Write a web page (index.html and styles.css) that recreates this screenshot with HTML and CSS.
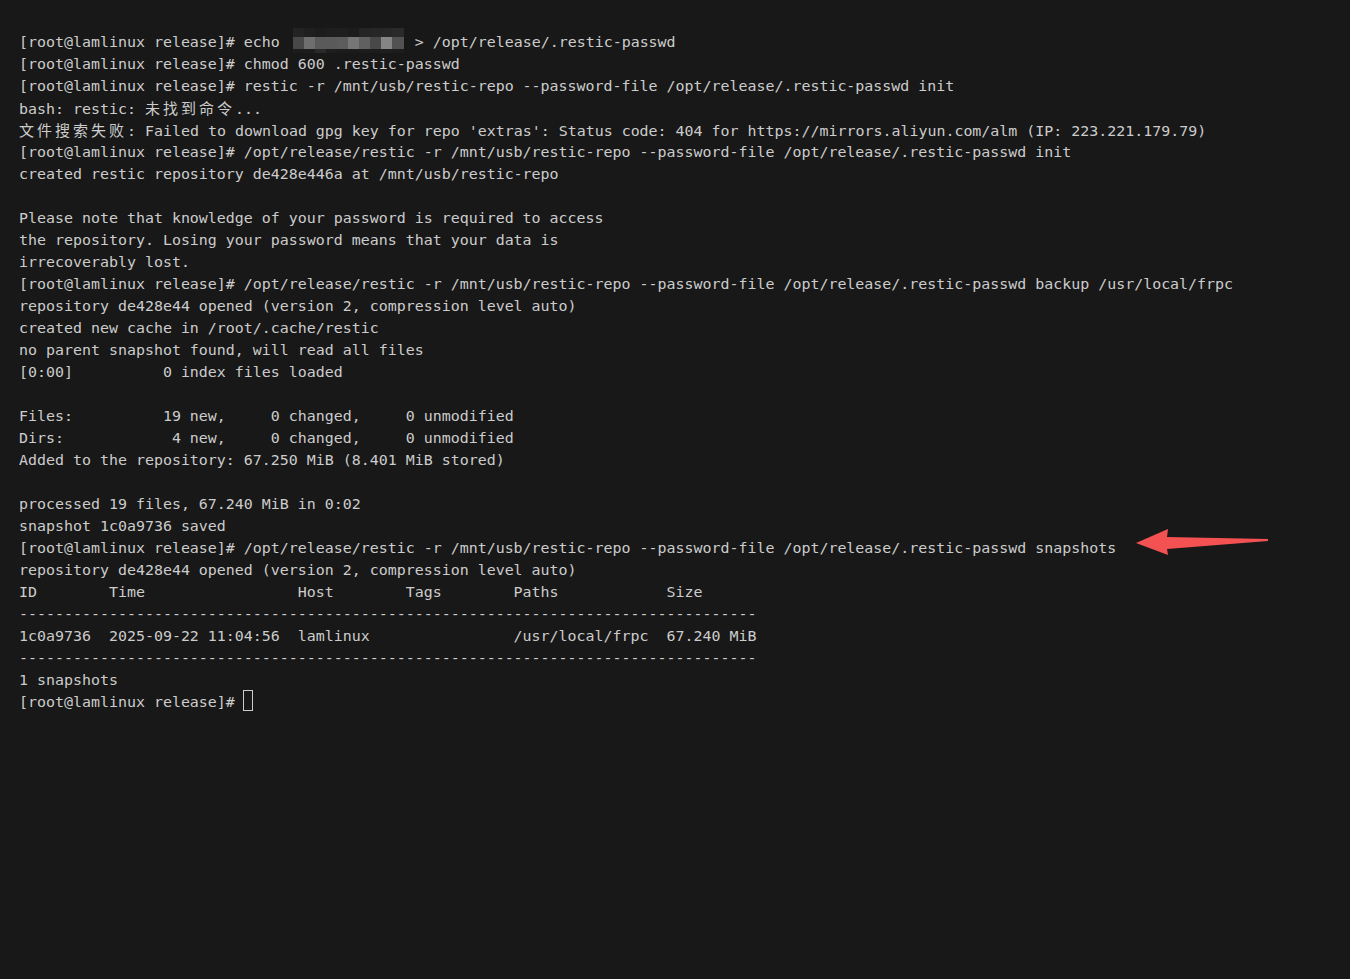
FILE: index.html
```html
<!DOCTYPE html>
<html lang="zh">
<head>
<meta charset="utf-8">
<title>terminal</title>
<link rel="stylesheet" href="styles.css">
</head>
<body>
<div class="term">
<div class="ln">[root@lamlinux release]# echo <span class="redact"><span class="mosaic"><span class="row r1"></span><span class="row r2"></span><span class="row r3"></span></span></span>&gt; /opt/release/.restic-passwd</div>
<div class="ln">[root@lamlinux release]# chmod 600 .restic-passwd</div>
<div class="ln">[root@lamlinux release]# restic -r /mnt/usb/restic-repo --password-file /opt/release/.restic-passwd init</div>
<div class="ln">bash: restic: <span class="cjk">未找到命令</span>...</div>
<div class="ln"><span class="cjk">文件搜索失败</span>: Failed to download gpg key for repo 'extras': Status code: 404 for https://mirrors.aliyun.com/alm (IP: 223.221.179.79)</div>
<div class="ln">[root@lamlinux release]# /opt/release/restic -r /mnt/usb/restic-repo --password-file /opt/release/.restic-passwd init</div>
<div class="ln">created restic repository de428e446a at /mnt/usb/restic-repo</div>
<div class="ln"></div>
<div class="ln">Please note that knowledge of your password is required to access</div>
<div class="ln">the repository. Losing your password means that your data is</div>
<div class="ln">irrecoverably lost.</div>
<div class="ln">[root@lamlinux release]# /opt/release/restic -r /mnt/usb/restic-repo --password-file /opt/release/.restic-passwd backup /usr/local/frpc</div>
<div class="ln">repository de428e44 opened (version 2, compression level auto)</div>
<div class="ln">created new cache in /root/.cache/restic</div>
<div class="ln">no parent snapshot found, will read all files</div>
<div class="ln">[0:00]          0 index files loaded</div>
<div class="ln"></div>
<div class="ln">Files:          19 new,     0 changed,     0 unmodified</div>
<div class="ln">Dirs:            4 new,     0 changed,     0 unmodified</div>
<div class="ln">Added to the repository: 67.250 MiB (8.401 MiB stored)</div>
<div class="ln"></div>
<div class="ln">processed 19 files, 67.240 MiB in 0:02</div>
<div class="ln">snapshot 1c0a9736 saved</div>
<div class="ln">[root@lamlinux release]# /opt/release/restic -r /mnt/usb/restic-repo --password-file /opt/release/.restic-passwd snapshots</div>
<div class="ln">repository de428e44 opened (version 2, compression level auto)</div>
<div class="ln">ID        Time                 Host        Tags        Paths            Size</div>
<div class="ln">----------------------------------------------------------------------------------</div>
<div class="ln">1c0a9736  2025-09-22 11:04:56  lamlinux                /usr/local/frpc  67.240 MiB</div>
<div class="ln">----------------------------------------------------------------------------------</div>
<div class="ln">1 snapshots</div>
<div class="ln">[root@lamlinux release]# <span class="cursor"></span></div>
</div>
<svg class="arrow" width="145" height="35" viewBox="0 0 145 35">
<polygon points="6,18 38,4 37,12 138,14 138,16 37,24 38,30" fill="#f45252"/>
</svg>
</body>
</html>
```
FILE: styles.css
```css
html, body {
  margin: 0;
  padding: 0;
  background: #181818;
  height: 100%;
}
body {
  position: relative;
  width: 1350px;
  height: 979px;
  overflow: hidden;
}
.term {
  padding: 31px 0 0 19px;
  font-family: "DejaVu Sans Mono", "Liberation Mono", monospace;
  font-size: 14.95px;
  line-height: 22px;
  color: #cccccc;
}
.ln {
  height: 22px;
  white-space: pre;
}
.cjk {
  font-family: "Noto Sans CJK SC", sans-serif;
  font-size: 15px;
  letter-spacing: 3px;
}
.redact {
  display: inline-block;
  position: relative;
  width: 111px;
  height: 22px;
  margin: 0 11px 0 4px;
  vertical-align: top;
}
.mosaic {
  position: absolute;
  left: 0;
  top: -3px;
  width: 111px;
  display: flex;
  flex-direction: column;
}
.row {
  display: block;
}
.r1 {
  height: 9px;
  background: linear-gradient(to right,
    #232323 0 11px, #1f1f1f 11px 22px, #1c1c1c 22px 33px, #1e1e1e 33px 44px,
    #1f1f1f 44px 55px, #1c1c1c 55px 66px, #242424 66px 77px, #262626 77px 88px,
    #272727 88px 99px, #2a2a2a 99px 111px);
}
.r2 {
  height: 12px;
  background: linear-gradient(to right,
    #484848 0 11px, #6e6e6e 11px 22px, #5a5a5a 22px 33px, #5a5a5a 33px 44px,
    #5c5c5c 44px 55px, #767676 55px 66px, #606060 66px 77px, #484848 77px 88px,
    #858585 88px 99px, #525252 99px 111px);
}
.r3 {
  height: 4px;
  background: linear-gradient(to right,
    #1c1c1c 0 22px, #2a2a2a 22px 33px, #1e1e1e 33px 44px, #1b1b1b 44px 66px,
    #1c1c1c 66px 88px, #1e1e1e 88px 99px, #1c1c1c 99px 111px);
}
.cursor {
  display: inline-block;
  width: 10px;
  height: 21px;
  margin-left: -1px;
  box-sizing: border-box;
  border: 1px solid #cccccc;
  vertical-align: top;
  position: relative;
  top: -1px;
}
.arrow {
  position: absolute;
  left: 1130px;
  top: 525px;
}
```
